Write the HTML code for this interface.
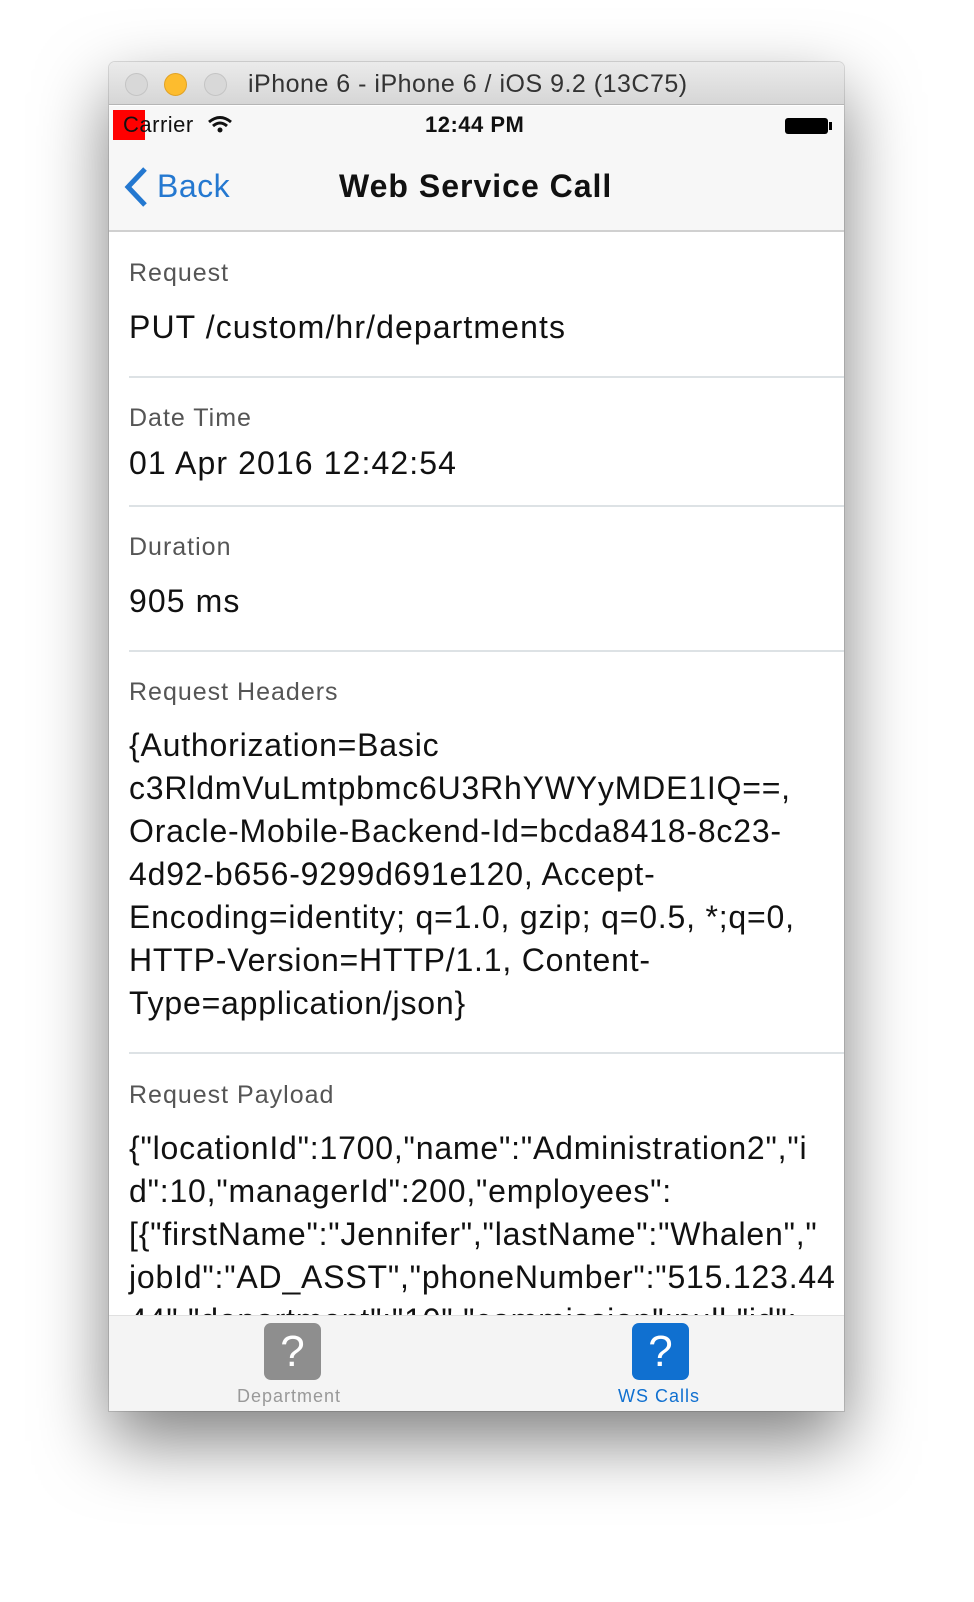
<!DOCTYPE html>
<html><head><meta charset="utf-8"><style>
*{margin:0;padding:0;box-sizing:border-box}
body{width:974px;height:1602px;background:#fff;font-family:"Liberation Sans",Arial,sans-serif;position:relative;overflow:hidden}
.win{position:absolute;left:109px;top:62px;width:735px;height:1349px;background:#fff;border-radius:6px 6px 0 0;box-shadow:0 30px 70px rgba(0,0,0,.5),0 0 0 1px rgba(0,0,0,.12);overflow:hidden}
.title{position:absolute;left:0;top:0;width:735px;height:43px;background:linear-gradient(#ebebeb,#d6d6d6);border-bottom:1px solid #b5b5b5}
.dot{position:absolute;top:11px;width:23px;height:23px;border-radius:50%;background:#d8d8d8;border:1px solid #c4c4c4}
.ttext{position:absolute;left:139px;top:8px;font-size:25px;color:#333;letter-spacing:.5px}
.a{position:absolute;white-space:nowrap}
.lab{font-size:25px;color:#555;left:20px;letter-spacing:1px}
.val{font-size:32px;color:#111;left:20px;letter-spacing:1.1px}
.sep{position:absolute;left:20px;right:0;height:2px;background:#dde2e5}
.ml{position:absolute;left:20px;font-size:32px;line-height:43px;color:#111;letter-spacing:.8px;white-space:pre}
</style></head><body>
<div class="win">
 <div class="title">
  <div class="dot" style="left:16px"></div>
  <div class="dot" style="left:55px;background:#fdbc2e;border-color:#e1a224"></div>
  <div class="dot" style="left:95px"></div>
  <div class="ttext">iPhone 6 - iPhone 6 / iOS 9.2 (13C75)</div>
 </div>
 <div style="position:absolute;top:44px;left:0;width:735px;height:126px;background:#f7f7f7;border-bottom:2px solid #d0d0d0"></div>
 <div style="position:absolute;left:4px;top:48px;width:32px;height:30px;background:#f00"></div>
 <div class="a" style="left:14px;top:50px;font-size:22px;color:#111;letter-spacing:.5px">Carrier</div>
 <svg style="position:absolute;left:98px;top:53px" width="26" height="20" viewBox="0 0 26 20"><path d="M2 7 Q13 -2 24 7" stroke="#111" stroke-width="3" fill="none"/><path d="M6 11 Q13 5 20 11" stroke="#111" stroke-width="3" fill="none"/><circle cx="13" cy="15" r="2.5" fill="#111"/></svg>
 <div class="a" style="left:316px;top:50px;font-size:22px;font-weight:bold;color:#111;letter-spacing:.5px">12:44 PM</div>
 <div style="position:absolute;left:676px;top:56px;width:43px;height:16px;background:#000;border-radius:3px"></div>
 <div style="position:absolute;left:720px;top:60px;width:3px;height:8px;background:#000"></div>
 <svg style="position:absolute;left:14px;top:104px" width="26" height="42" viewBox="0 0 26 42"><path d="M22 3 L5 21 L22 39" stroke="#2478d0" stroke-width="5" fill="none"/></svg>
 <div class="a" style="left:48px;top:106px;font-size:32px;color:#2478d0;letter-spacing:.5px">Back</div>
 <div class="a" style="left:230px;top:106px;font-size:32px;font-weight:bold;color:#111;letter-spacing:1px">Web Service Call</div>

 <div class="a lab" style="top:197px">Request</div>
 <div class="a val" style="top:247px">PUT /custom/hr/departments</div>
 <div class="sep" style="top:314px"></div>
 <div class="a lab" style="top:342px">Date Time</div>
 <div class="a val" style="top:383px">01 Apr 2016 12:42:54</div>
 <div class="sep" style="top:443px"></div>
 <div class="a lab" style="top:471px">Duration</div>
 <div class="a val" style="top:521px">905 ms</div>
 <div class="sep" style="top:588px"></div>
 <div class="a lab" style="top:616px">Request Headers</div>
 <div class="ml" style="top:662px">{Authorization=Basic
c3RldmVuLmtpbmc6U3RhYWYyMDE1IQ==,
Oracle-Mobile-Backend-Id=bcda8418-8c23-
4d92-b656-9299d691e120, Accept-
Encoding=identity; q=1.0, gzip; q=0.5, *;q=0,
HTTP-Version=HTTP/1.1, Content-
Type=application/json}</div>
 <div class="sep" style="top:990px"></div>
 <div class="a lab" style="top:1019px">Request Payload</div>
 <div class="ml" style="top:1065px">{"locationId":1700,"name":"Administration2","i
d":10,"managerId":200,"employees":
[{"firstName":"Jennifer","lastName":"Whalen","
jobId":"AD_ASST","phoneNumber":"515.123.44
44","department":"10","commission":null,"id":</div>
 <div style="position:absolute;left:0;top:1253px;width:735px;height:96px;background:#f4f4f4;border-top:1px solid #e0e0e0"></div>
 <div style="position:absolute;left:155px;top:1261px;width:57px;height:57px;background:#8e8e8e;border-radius:7px;color:#fff;font-size:44px;text-align:center;line-height:57px">?</div>
 <div class="a" style="left:128px;top:1324px;font-size:18px;color:#999;letter-spacing:1px">Department</div>
 <div style="position:absolute;left:523px;top:1261px;width:57px;height:57px;background:#1070d0;border-radius:7px;color:#fff;font-size:44px;text-align:center;line-height:57px">?</div>
 <div class="a" style="left:509px;top:1324px;font-size:18px;color:#1070d0;letter-spacing:1px">WS Calls</div>
</div>
</body></html>
